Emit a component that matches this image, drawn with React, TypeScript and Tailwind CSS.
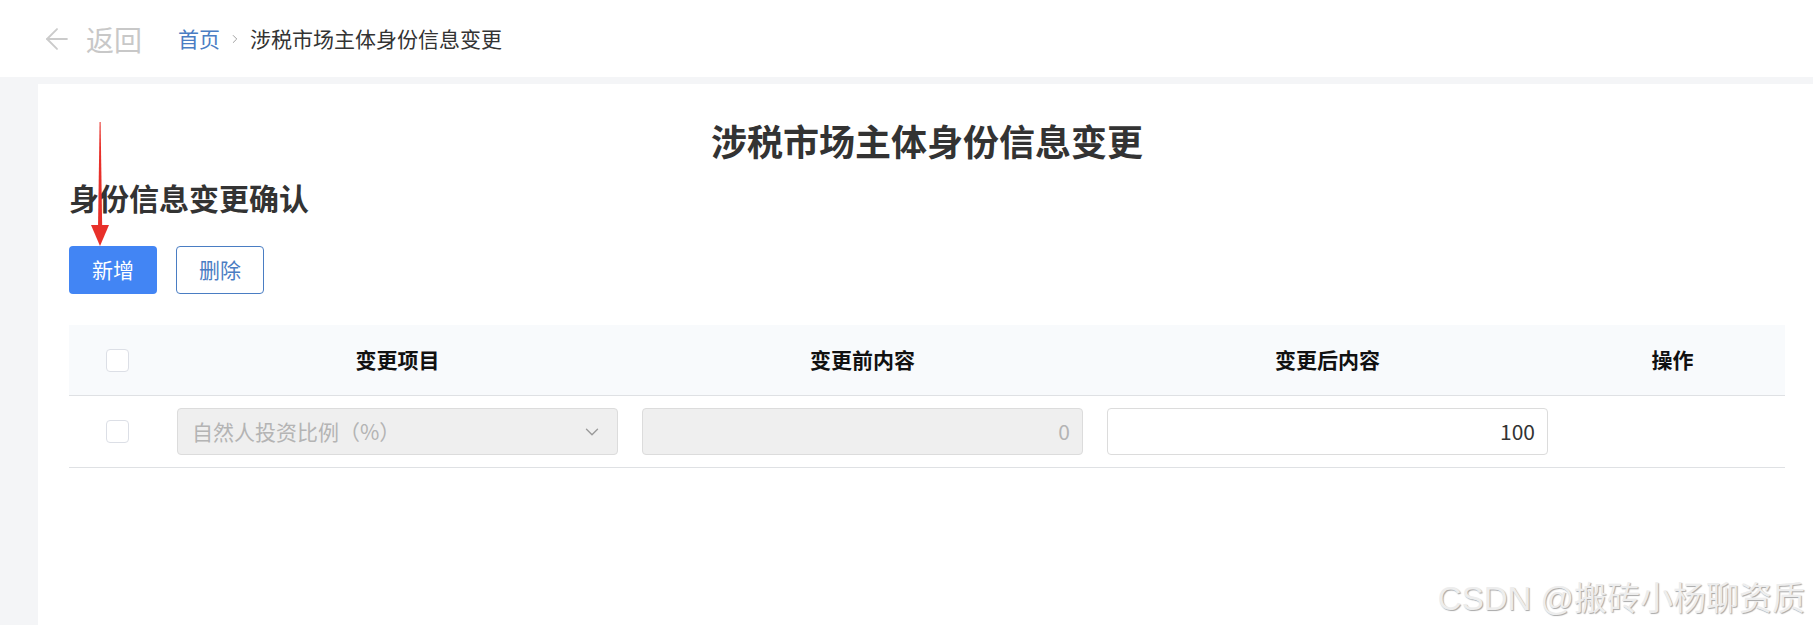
import React from "react";
import { ArrowLeft, ChevronDown, ChevronRight } from "lucide-react";

const font = '"Noto Sans CJK SC", "Noto Sans", sans-serif';

function Checkbox() {
  return <div className="w-[23px] h-[23px] rounded-[4px] border border-[#dcdfe6] bg-white" />;
}

export default function App() {
  return (
    <div className="relative w-full h-[625px] bg-white flex flex-col overflow-hidden" style={{ fontFamily: font }}>
      {/* top bar */}
      <div className="h-[77px] shrink-0 flex items-center pl-[40px]">
        <ArrowLeft size={34} strokeWidth={1.3} className="text-[#cbcbcb]" />
        <span className="ml-[12px] text-[28px] leading-none text-[#c8c8c8]">返回</span>
        <span className="ml-[36px] text-[21px] leading-none text-[#4a7dc3]">首页</span>
        <ChevronRight size={14} strokeWidth={1.6} className="ml-[8px] text-[#9a9a9a]" />
        <span className="ml-[8px] text-[21px] leading-none text-[#333333]">涉税市场主体身份信息变更</span>
      </div>

      {/* gray workspace */}
      <div className="flex-1 bg-[#f4f5f7] pl-[38px] pt-[7px]">
        <div className="h-full bg-white pl-[31px] pr-[28px] pt-[31px]">
          <div className="text-center text-[36px] leading-[50px] font-bold text-[#333333]">涉税市场主体身份信息变更</div>
          <div className="mt-[12px] text-[30px] leading-[40px] font-bold text-[#333333]">身份信息变更确认</div>

          <div className="mt-[29px] flex gap-[19px]">
            <button className="w-[88px] h-[48px] rounded-[4px] bg-[#4285f4] text-white text-[21px]">新增</button>
            <button className="w-[88px] h-[48px] rounded-[4px] border border-[#4a7dc3] bg-white text-[#4a7dc3] text-[21px]">删除</button>
          </div>

          {/* table */}
          <div className="mt-[31px]">
            <div className="flex h-[71px] bg-[#f8fafc] border-b border-[#dfe1e4] items-center text-[21px] font-bold text-[#111111]">
              <div className="w-[96px] flex justify-center"><Checkbox /></div>
              <div className="w-[465px] text-center">变更项目</div>
              <div className="w-[465px] text-center">变更前内容</div>
              <div className="w-[465px] text-center">变更后内容</div>
              <div className="flex-1 text-center">操作</div>
            </div>
            <div className="flex h-[72px] border-b border-[#dfe1e4] items-center text-[21px]">
              <div className="w-[96px] flex justify-center"><Checkbox /></div>
              <div className="w-[465px] px-[12px]">
                <div className="h-[47px] rounded-[4px] border border-[#dcdcdc] bg-[#efefef] flex items-center justify-between pl-[14px] pr-[14px] text-[#b4b4b4]">
                  <span>自然人投资比例（%）</span>
                  <ChevronDown size={22} strokeWidth={1.5} className="text-[#9a9a9a]" />
                </div>
              </div>
              <div className="w-[465px] px-[12px]">
                <div className="h-[47px] rounded-[4px] border border-[#dcdcdc] bg-[#efefef] flex items-center justify-end pr-[12px] text-[#b4b4b4]">0</div>
              </div>
              <div className="w-[465px] px-[12px]">
                <div className="h-[47px] rounded-[4px] border border-[#dcdcdc] bg-white flex items-center justify-end pr-[12px] text-[#333333]">100</div>
              </div>
              <div className="flex-1" />
            </div>
          </div>
        </div>
      </div>

      {/* red annotation arrow */}
      <svg className="absolute left-[88px] top-[122px]" width="26" height="126" viewBox="0 0 26 126">
        <polygon points="11.6,0 12.6,0 14.2,106 10,106" fill="#e8302a" />
        <polygon points="3,103 21,103 12,124" fill="#e8302a" />
      </svg>

      {/* watermark */}
      <div
        className="absolute right-[8px] bottom-[10px] text-[33px] leading-none text-[#ededed] [text-shadow:1px_1px_1px_#a8a8a8]"
        style={{ fontFamily: '"Liberation Sans", "Noto Sans CJK SC", sans-serif' }}
      >
        CSDN @搬砖小杨聊资质
      </div>
    </div>
  );
}
